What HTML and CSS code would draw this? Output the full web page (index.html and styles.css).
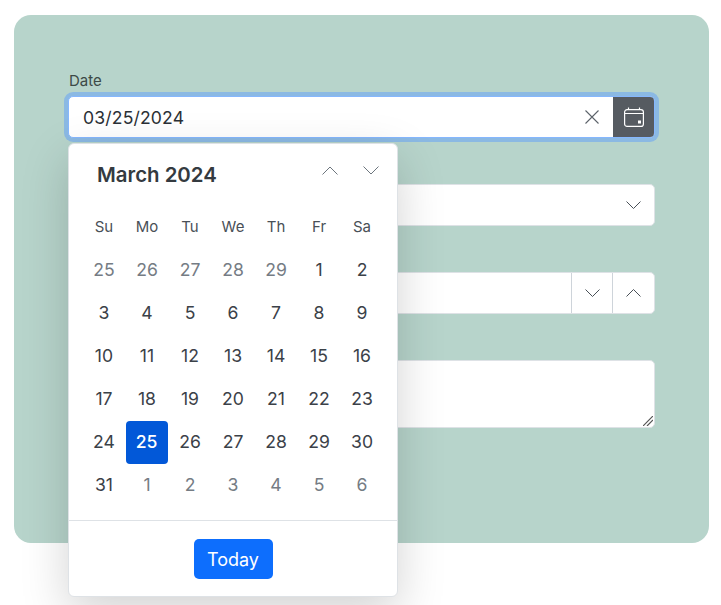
FILE: index.html
```html
<!DOCTYPE html>
<html lang="en">
<head>
<meta charset="utf-8">
<title>Date picker</title>
<link rel="stylesheet" href="styles.css">
</head>
<body>
<main class="card">
  <div class="field">
    <label class="label">Date</label>
    <div class="date-group">
      <div class="date-input">
        <span class="date-value">03/25/2024</span>
        <svg class="clear" width="14" height="14" viewBox="0 0 14 14"><path d="M.5.5l13 13M13.500.5l-13 13"/></svg>
      </div>
      <button class="cal-btn" type="button">
        <svg width="20" height="20" viewBox="0 0 20 20"><rect x=".6" y="2.600" width="18.800" height="16.800" rx="2.500"/><path d="M.6 6.500h18.800M4.500.5v2M15.500.5v2"/><rect class="dot" x="14" y="13.500" width="3" height="3"/></svg>
      </button>
    </div>
    <div class="popup">
      <div class="popup-head">
        <span class="month">March 2024</span>
        <div class="nav">
          <svg width="16" height="9" viewBox="0 0 16 9"><path d="M.5 8.500l7.500-7.500 7.500 7.500"/></svg>
          <svg width="16" height="9" viewBox="0 0 16 9"><path d="M.5.5l7.500 7.500 7.500-7.500"/></svg>
        </div>
      </div>
      <div class="grid">
        <span class="dow">Su</span><span class="dow">Mo</span><span class="dow">Tu</span><span class="dow">We</span><span class="dow">Th</span><span class="dow">Fr</span><span class="dow">Sa</span>
        <span class="day muted">25</span><span class="day muted">26</span><span class="day muted">27</span><span class="day muted">28</span><span class="day muted">29</span><span class="day">1</span><span class="day">2</span>
        <span class="day">3</span><span class="day">4</span><span class="day">5</span><span class="day">6</span><span class="day">7</span><span class="day">8</span><span class="day">9</span>
        <span class="day">10</span><span class="day">11</span><span class="day">12</span><span class="day">13</span><span class="day">14</span><span class="day">15</span><span class="day">16</span>
        <span class="day">17</span><span class="day">18</span><span class="day">19</span><span class="day">20</span><span class="day">21</span><span class="day">22</span><span class="day">23</span>
        <span class="day">24</span><span class="day selected">25</span><span class="day">26</span><span class="day">27</span><span class="day">28</span><span class="day">29</span><span class="day">30</span>
        <span class="day">31</span><span class="day muted">1</span><span class="day muted">2</span><span class="day muted">3</span><span class="day muted">4</span><span class="day muted">5</span><span class="day muted">6</span>
      </div>
      <div class="popup-foot"><button class="today" type="button">Today</button></div>
    </div>
  </div>
  <div class="field">
    <div class="control select">
      <svg class="chev" width="15" height="8" viewBox="0 0 15 8"><path d="M.5.5l7 7 7-7"/></svg>
    </div>
  </div>
  <div class="field">
    <div class="control number">
      <span class="spin"><svg class="chev" width="15" height="8" viewBox="0 0 15 8"><path d="M.5.5l7 7 7-7"/></svg></span>
      <span class="spin"><svg class="chev" width="15" height="8" viewBox="0 0 15 8"><path d="M.5 7.500l7-7 7 7"/></svg></span>
    </div>
  </div>
  <div class="field">
    <div class="control area">
      <svg class="grip" width="10" height="10" viewBox="0 0 10 10"><path d="M0 10l10-10M4 10l6-6"/></svg>
    </div>
  </div>
</main>
</body>
</html>
```
FILE: styles.css
```css
* { box-sizing: border-box; }
html, body { margin: 0; height: 605px; overflow: hidden; background: #fff; }
body {
  padding: 15px 12px 0 14px;
  font-family: Inter, "Liberation Sans", sans-serif;
  color: #212529;
}
.card {
  height: 528px;
  background: #b7d4cb;
  border-radius: 17px;
  padding: 57px 54px 0 54px;
  display: flex;
  flex-direction: column;
}
.field { position: relative; padding-top: 46px; }
.field:first-child { padding-top: 0; }
.label {
  display: block;
  height: 24px;
  padding: 1px 0 0 1px;
  line-height: 16px;
  font-size: 15px;
  color: #3d4a47;
}
.date-group {
  height: 42px;
  display: flex;
  border: 1px solid #86b7fe;
  border-radius: 5px;
  box-shadow: 0 0 0 4px #8bb9e3;
  overflow: hidden;
  background: #fff;
}
.date-input {
  flex: 1;
  display: flex;
  align-items: center;
  justify-content: space-between;
  padding: 0 14px;
}
.date-value { font-size: 17.600px; letter-spacing: .15px; color: #2b3036; }
.clear path { fill: none; stroke: #5c636a; stroke-width: 1.100; }
.cal-btn {
  width: 41px;
  border: 0;
  padding: 0;
  background: #565b61;
  display: flex;
  align-items: center;
  justify-content: center;
}
.cal-btn rect, .cal-btn path { fill: none; stroke: #fff; stroke-width: 1.200; }
.cal-btn .dot { fill: #fff; stroke: none; }
.popup {
  position: absolute;
  z-index: 2;
  left: 0;
  top: 71px;
  width: 330px;
  height: 454px;
  background: #fff;
  border: 1px solid #dee2e6;
  border-radius: 6px;
  box-shadow: 0 16px 48px rgba(0, 0, 0, .175);
  display: flex;
  flex-direction: column;
}
.popup-head {
  height: 62px;
  padding: 0 18px 0 28px;
  display: flex;
  align-items: center;
  justify-content: space-between;
}
.month { font-size: 20.400px; font-weight: 600; color: #343a40; margin-top: -2px; }
.nav { display: flex; gap: 25px; margin-top: -9px; }
.nav path { fill: none; stroke: #6c757d; stroke-width: 1; }
.grid {
  padding: 0 13.500px;
  display: grid;
  grid-template-columns: repeat(7, 43px);
  grid-auto-rows: 43px;
  height: 314px;
}
.dow, .day { display: flex; align-items: center; justify-content: center; padding-bottom: 2px; }
.dow { font-size: 15px; font-weight: 400; color: #495057; }
.day { font-size: 17.600px; color: #3b4148; }
.muted { color: #757c84; }
.selected {
  background: #0258d8;
  border-radius: 4px;
  color: #fff;
  font-weight: 500;
  margin-right: 1px;
}
.popup-foot {
  flex: 1;
  border-top: 1px solid #dee2e6;
  display: flex;
  align-items: center;
  justify-content: center;
}
.today {
  width: 79px;
  height: 40px;
  padding: 1px 0 0;
  border: 0;
  border-radius: 5px;
  background: #0d6efd;
  color: #fff;
  font: 18px Inter, "Liberation Sans", sans-serif;
}
.control {
  position: relative;
  display: flex;
  align-items: center;
  justify-content: flex-end;
  background: #fff;
  border: 1px solid #dee2e6;
  border-radius: 5px;
  height: 42px;
}
.chev path { fill: none; stroke: #495057; stroke-width: 1; }
.select { padding-right: 13px; }
.number { align-items: stretch; }
.spin {
  width: 41px;
  border-left: 1px solid #ced4da;
  display: flex;
  align-items: center;
  justify-content: center;
}
.spin + .spin { width: 42px; }
.area { height: 68px; }
.grip { position: absolute; right: 1px; bottom: 1px; }
.grip path { fill: none; stroke: #555; stroke-width: 1.200; }
```
